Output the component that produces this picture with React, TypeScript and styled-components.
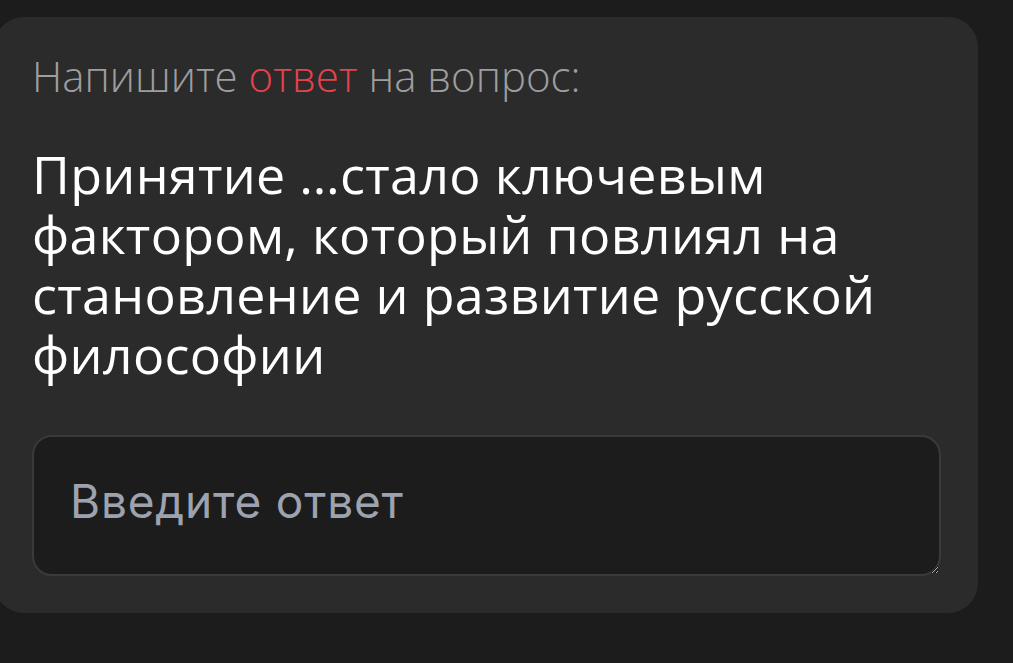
import React from 'react';
import styled, {createGlobalStyle} from "styled-components";

const GlobalStyle = createGlobalStyle`
  html, body {
    margin: 0;
    padding: 0;
    background: #1c1c1c;
    overflow: hidden;
  }
`

export default function App() {
    return (
        <>
            <GlobalStyle/>
            <StyledPage>
                <StyledCard>
                    <StyledPrompt>
                        Напишите <StyledAccent>ответ</StyledAccent> на вопрос:
                    </StyledPrompt>
                    <StyledQuestion>
                        Принятие …стало ключевым фактором, который повлиял на становление и развитие русской философии
                    </StyledQuestion>
                    <StyledAnswer placeholder={"Введите ответ"}/>
                </StyledCard>
            </StyledPage>
        </>
    );
};

const StyledPage = styled.main`
  min-height: 663px;
  padding-top: 17px;
  box-sizing: border-box;
`

const StyledCard = styled.section`
  box-sizing: border-box;
  width: 984px;
  height: 596px;
  margin-left: -6px;
  padding: 34px 37px 37px 38px;
  display: flex;
  flex-direction: column;
  background: #2b2b2b;
  border-radius: 30px;
`

const StyledPrompt = styled.p`
  margin: 0;
  color: #9e9e9e;
  font-family: "Open Sans", sans-serif;
  font-size: 42px;
  font-weight: 300;
  line-height: 50px;
  letter-spacing: 0;
`

const StyledAccent = styled.span`
  color: #e4434c;
`

const StyledQuestion = styled.h2`
  margin: 43px 0 0;
  color: #ffffff;
  font-family: "Open Sans", sans-serif;
  font-size: 52px;
  font-weight: 500;
  line-height: 60px;
  letter-spacing: 0.3px;
`

const StyledAnswer = styled.textarea`
  box-sizing: border-box;
  margin-top: 51px;
  width: 909px;
  height: 141px;
  padding: 37px 36px;
  background: #1c1c1c;
  border: 2px solid #3a3a3a;
  border-radius: 20px;
  color: #ffffff;
  font-family: Inter, sans-serif;
  font-size: 46px;
  line-height: 54px;
  letter-spacing: 0.8px;
  outline: none;

  &::placeholder {
    color: #9ca3af;
  }
`
